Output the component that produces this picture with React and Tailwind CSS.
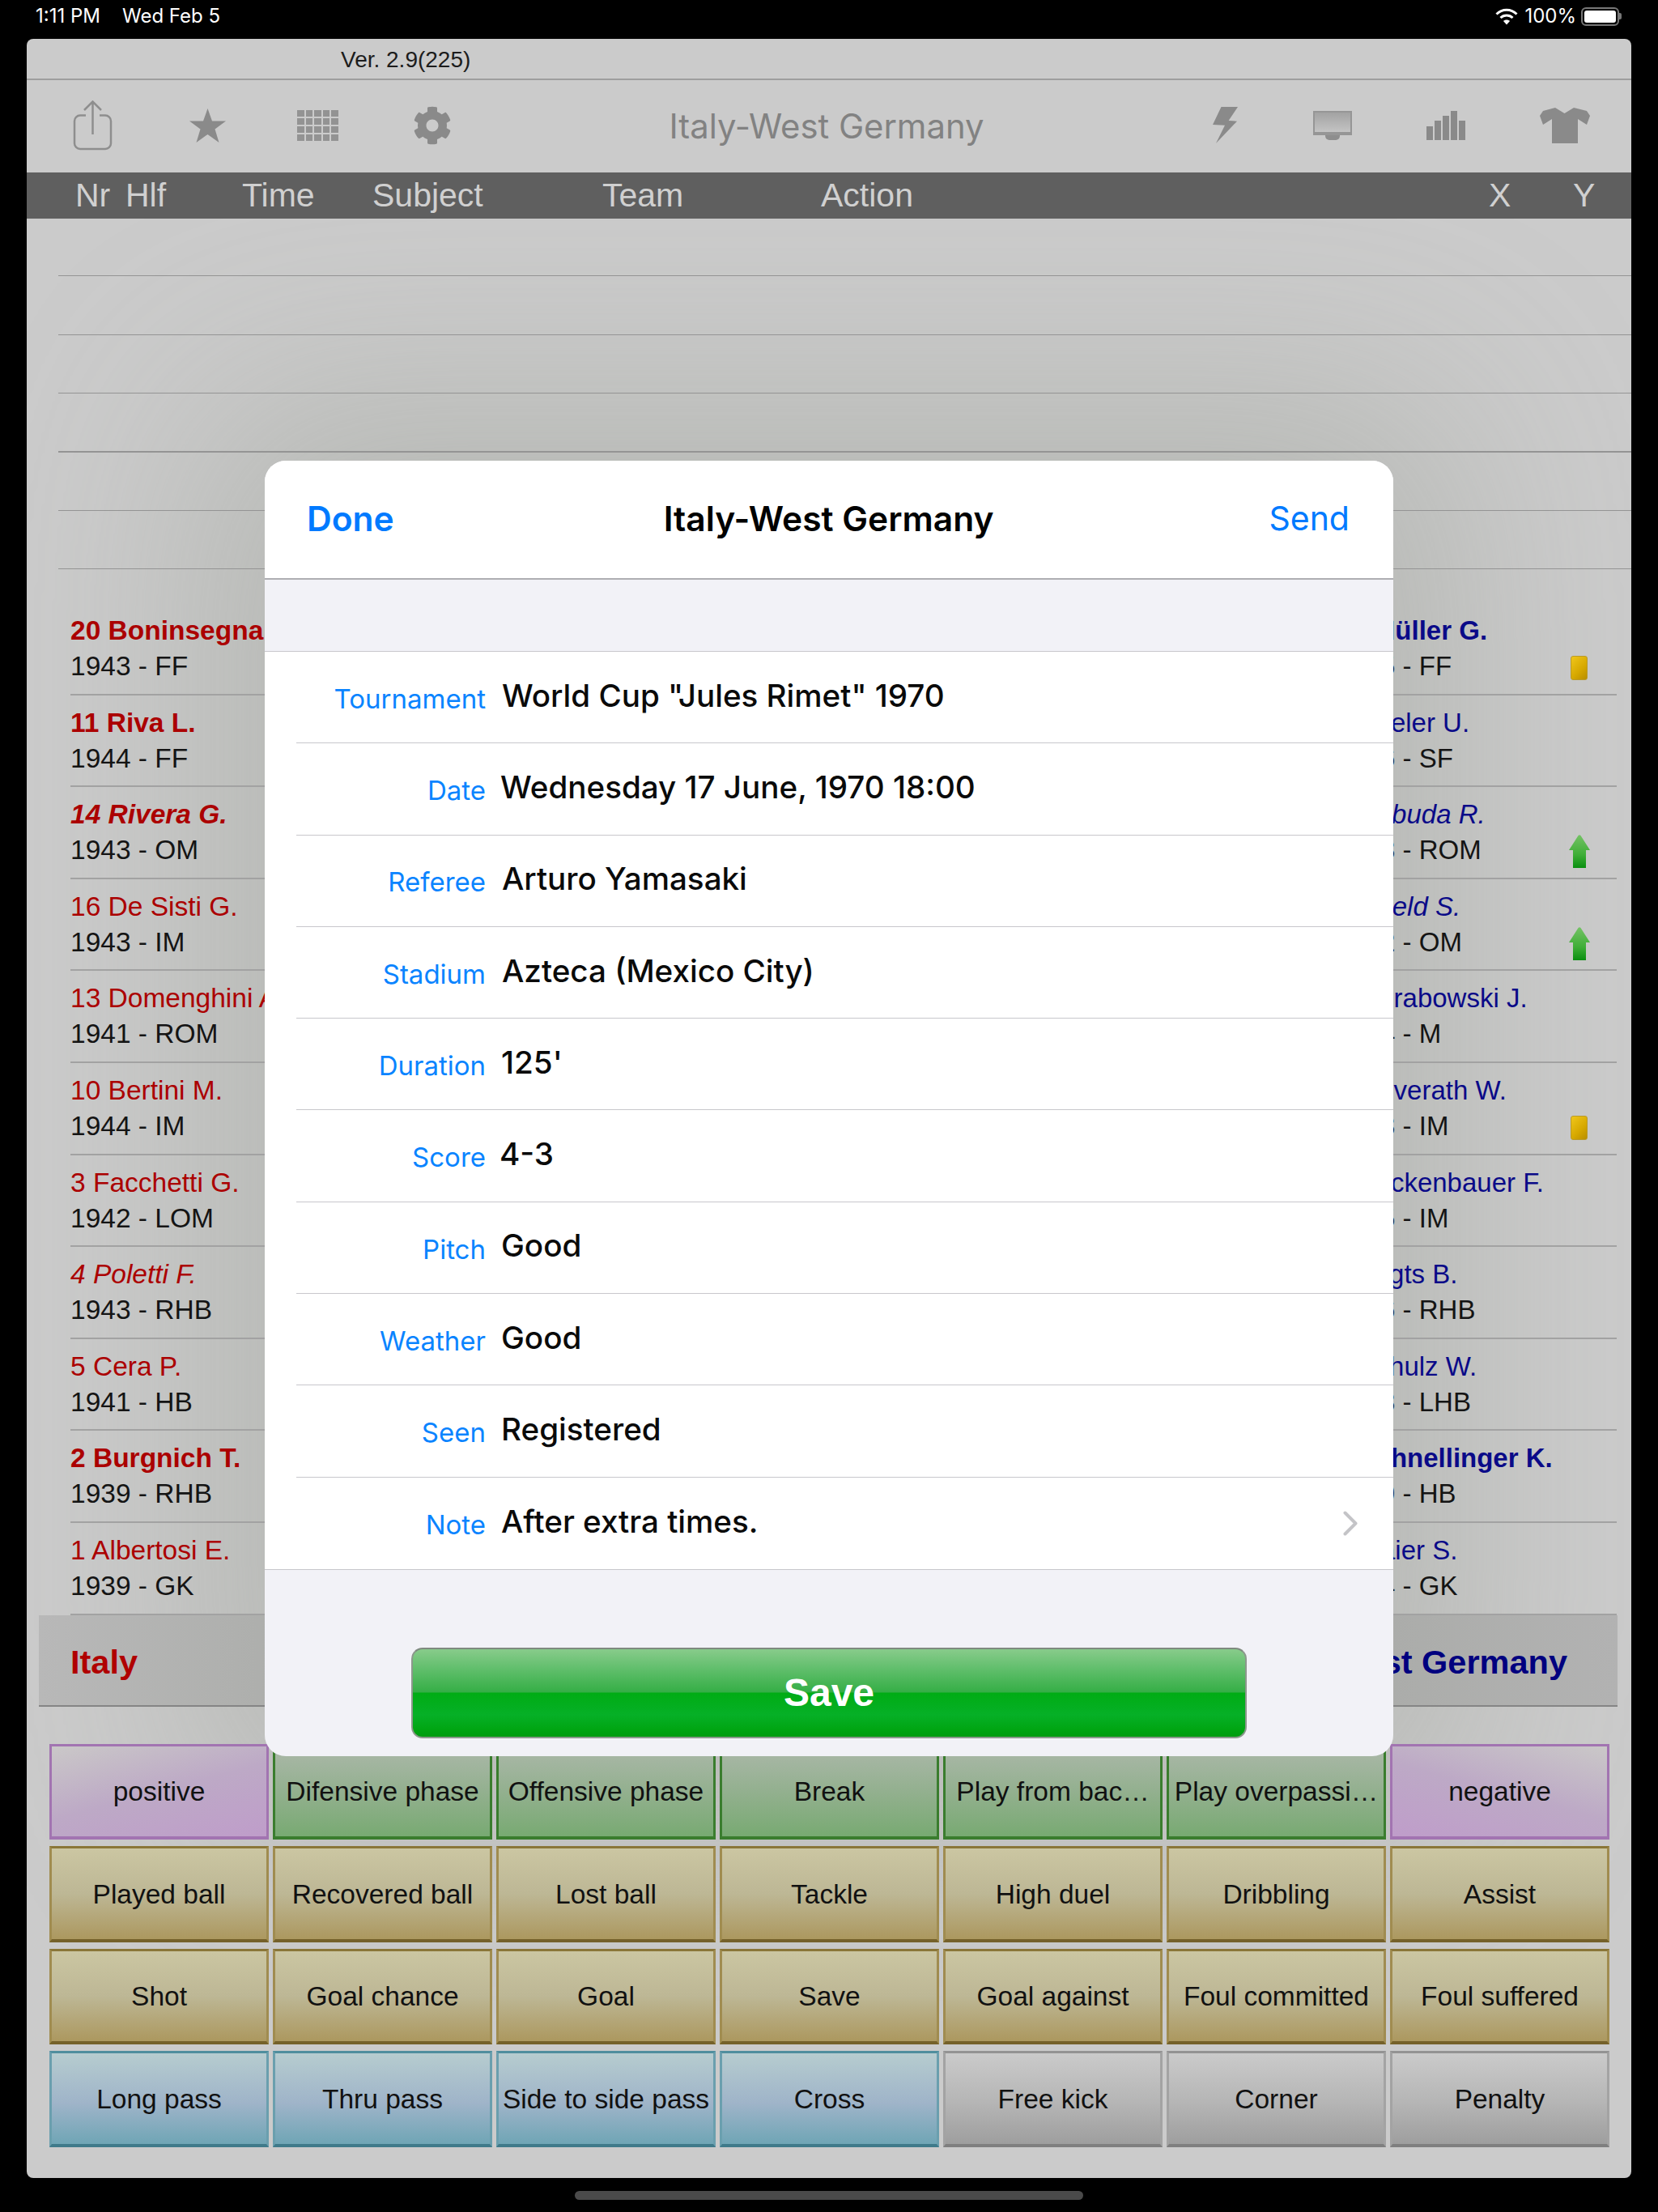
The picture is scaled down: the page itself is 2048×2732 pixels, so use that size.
import React from 'react'
import { FaCog } from 'react-icons/fa'

const leftPlayers = [
  { name: '20 Boninsegna R.', info: '1943 - FF', style: 'font-bold' },
  { name: '11 Riva L.', info: '1944 - FF', style: 'font-bold' },
  { name: '14 Rivera G.', info: '1943 - OM', style: 'font-bold italic' },
  { name: '16 De Sisti G.', info: '1943 - IM', style: '' },
  { name: '13 Domenghini A.', info: '1941 - ROM', style: '' },
  { name: '10 Bertini M.', info: '1944 - IM', style: '' },
  { name: '3 Facchetti G.', info: '1942 - LOM', style: '' },
  { name: '4 Poletti F.', info: '1943 - RHB', style: 'italic' },
  { name: '5 Cera P.', info: '1941 - HB', style: '' },
  { name: '2 Burgnich T.', info: '1939 - RHB', style: 'font-bold' },
  { name: '1 Albertosi E.', info: '1939 - GK', style: '' },
]

const rightPlayers = [
  { name: '13 Müller G.', info: '1945 - FF', style: 'font-bold', mark: 'card' },
  { name: '9 Seeler U.', info: '1936 - SF', style: '' },
  { name: '11 Libuda R.', info: '1943 - ROM', style: 'italic', mark: 'arrow' },
  { name: '21 Held S.', info: '1942 - OM', style: 'italic', mark: 'arrow' },
  { name: '20 Grabowski J.', info: '1944 - M', style: '' },
  { name: '12 Overath W.', info: '1943 - IM', style: '', mark: 'card' },
  { name: '5 Beckenbauer F.', info: '1945 - IM', style: '' },
  { name: '2 Vogts B.', info: '1946 - RHB', style: '' },
  { name: '4 Schulz W.', info: '1938 - LHB', style: '' },
  { name: '3 Schnellinger K.', info: '1939 - HB', style: 'font-bold' },
  { name: '1 Maier S.', info: '1944 - GK', style: '' },
]

const rows = [
  { label: 'Tournament', value: 'World Cup "Jules Rimet" 1970', gap: 'ml-[20px]' },
  { label: 'Date', value: 'Wednesday 17 June, 1970 18:00', gap: 'ml-[18px]' },
  { label: 'Referee', value: 'Arturo Yamasaki', gap: 'ml-[20px]' },
  { label: 'Stadium', value: 'Azteca (Mexico City)', gap: 'ml-[20px]' },
  { label: 'Duration', value: "125'", gap: 'ml-[19px]' },
  { label: 'Score', value: '4-3', gap: 'ml-[17px]' },
  { label: 'Pitch', value: 'Good', gap: 'ml-[19px]' },
  { label: 'Weather', value: 'Good', gap: 'ml-[19px]' },
  { label: 'Seen', value: 'Registered', gap: 'ml-[19px]' },
  { label: 'Note', value: 'After extra times.', gap: 'ml-[19px]', chevron: true },
]

const purple1 = 'border-[#a274b1] bg-[linear-gradient(165deg,#cac8c8_0%,#bda9c6_50%,#bf9dca_100%)]'
const purple2 = 'border-[#a274b1] bg-[linear-gradient(195deg,#cac8c8_0%,#bda9c6_50%,#bf9dca_100%)]'
const green = 'border-[#3a7d2e] bg-[linear-gradient(180deg,#abb8a9_0%,#93b08f_50%,#78aa72_100%)]'
const tan = 'border-[#a08c50] border-t-[#8a7638] border-b-[#75612a] bg-[linear-gradient(180deg,#cbc6a2_0%,#bdb795_50%,#ac985f_100%)]'
const blue = 'border-[#6a9fae] border-t-[#4f8e9e] border-b-[#3f7a8a] bg-[linear-gradient(180deg,#b6cccf_0%,#9fb4c9_55%,#6fa5b5_100%)]'
const gray = 'border-[#a3a3a3] border-t-[#939393] border-b-[#7f7f7f] bg-[linear-gradient(180deg,#cacaca_0%,#b5b5b5_55%,#9e9e9e_100%)]'

const buttons = [
  ['positive', purple1], ['Difensive phase', green], ['Offensive phase', green], ['Break', green], ['Play from bac…', green], ['Play overpassi…', green], ['negative', purple2],
  ['Played ball', tan], ['Recovered ball', tan], ['Lost ball', tan], ['Tackle', tan], ['High duel', tan], ['Dribbling', tan], ['Assist', tan],
  ['Shot', tan], ['Goal chance', tan], ['Goal', tan], ['Save', tan], ['Goal against', tan], ['Foul committed', tan], ['Foul suffered', tan],
  ['Long pass', blue], ['Thru pass', blue], ['Side to side pass', blue], ['Cross', blue], ['Free kick', gray], ['Corner', gray], ['Penalty', gray],
]

const ShareIcon = () => (
  <svg width="49" height="62" viewBox="0 0 49 62" fill="none" stroke="#8e8e8e" strokeWidth="2.5">
    <path d="M16 18.5H9a7 7 0 0 0-7 7V53a7 7 0 0 0 7 7h31a7 7 0 0 0 7-7V25.500a7 7 0 0 0-7-7h-7" />
    <path d="M24.500 2V42M14 12L24.500 1.500L35 12" />
  </svg>
)

const StarIcon = () => (
  <svg width="45" height="42" viewBox="0 0 45 42" fill="#8a8a8a">
    <path d="M22.500 0L28 15.500H45L31.500 25.500L36.500 42L22.500 32L8.500 42L13.500 25.500L0 15.500H17Z" />
  </svg>
)

const GridIcon = () => (
  <div className="grid grid-cols-5 gap-[2px] w-[51px]">
    {Array.from({ length: 20 }).map((_, i) => (
      <div key={i} className="h-[8px] bg-[#939393]" />
    ))}
  </div>
)

const BoltIcon = () => (
  <svg width="32" height="46" viewBox="0 0 32 46" fill="#8a8a8a">
    <path d="M31 0H10.500L0 22L15 22.700L4 45L30 17.700L19.600 17Z" />
  </svg>
)

const MonitorIcon = () => (
  <div className="flex flex-col items-center w-[48px]">
    <div className="w-[48px] h-[30px] border-[2px] border-b-[4px] border-[#969696] bg-[linear-gradient(180deg,#a2a2a2_0%,#c4c4c4_100%)]" />
    <div className="w-[18px] h-[6px] rounded-b-[5px] bg-[#8e8e8e]" />
  </div>
)

const BarsIcon = () => (
  <div className="flex items-end gap-[2px] h-[36px]">
    <div className="w-[8px] h-[17px] bg-[#8a8a8a]" />
    <div className="w-[8px] h-[24px] bg-[#8a8a8a]" />
    <div className="w-[8px] h-[30px] bg-[#8a8a8a]" />
    <div className="w-[8px] h-[36px] bg-[#8a8a8a]" />
    <div className="w-[8px] h-[24px] bg-[#8a8a8a]" />
  </div>
)

const ShirtIcon = () => (
  <svg width="64" height="44" viewBox="0 0 64 44" fill="#8a8a8a">
    <path d="M20 0L31.500 7L43 0L59 4L63 10L59 21L48 14V44H16V14L5 21L1 10L5 4Z" />
  </svg>
)

const UpArrow = () => (
  <svg width="26" height="41" viewBox="0 0 26 41">
    <defs>
      <linearGradient id="upArrow" x1="0" y1="0" x2="0" y2="1">
        <stop offset="0" stopColor="#74c265" />
        <stop offset="0.6" stopColor="#3fae37" />
        <stop offset="1" stopColor="#0a8f10" />
      </linearGradient>
    </defs>
    <path d="M11.500 1Q13 -0.500 14.500 1L26 19H21V41H5V19H0Z" fill="url(#upArrow)" />
  </svg>
)

const YellowCard = () => (
  <div className="w-[21px] h-[30px] rounded-[3px] border border-[#b99a2a] bg-[linear-gradient(135deg,#f0c61a_0%,#d6a800_60%,#b88e00_100%)]" />
)

const WifiIcon = () => (
  <svg width="28" height="21" viewBox="0 0 28 21" fill="none" stroke="#ffffff" strokeWidth="3">
    <path d="M1.500 7.500C8.500 0.500 19.500 0.500 26.500 7.500" />
    <path d="M6.500 12C10.500 8 17.500 8 21.500 12" />
    <path d="M14 20.500L10 16C12 14 16 14 18 16Z" fill="#ffffff" stroke="none" />
  </svg>
)

const PlayerRow = ({ player, tone, size, children }) => (
  <div className="h-[113.600px] border-b-2 border-[#a2a2a2] pt-[12px] flex justify-between">
    <div className={`whitespace-nowrap ${size}`}>
      <div className={`h-[44px] leading-[44px] ${tone} ${player.style}`}>{player.name}</div>
      <div className="h-[44px] leading-[44px] text-[#141414]">{player.info}</div>
    </div>
    {children}
  </div>
)

const DetailRow = ({ row, last }) => (
  <div className={last ? 'border-b border-[#c8c7cc] bg-white' : 'pl-[39px] bg-white'}>
    <div className={`h-[113.300px] flex items-center ${last ? 'pl-[39px]' : 'border-b border-[#c8c7cc]'}`}>
      <div className="w-[234px] text-right text-[33px] text-[#0a84ff] mt-[5px]">{row.label}</div>
      <div className={`${row.gap} flex-1 text-[38.600px] font-medium text-[#0a0a0a] -mt-[3px]`}>{row.value}</div>
      {row.chevron && (
        <svg className="mr-[44px]" width="18" height="31" viewBox="0 0 18 31" fill="none" stroke="#c4c4c7" strokeWidth="4" strokeLinecap="round" strokeLinejoin="round">
          <path d="M2.500 2.500L15.500 15.500L2.500 28.500" />
        </svg>
      )}
    </div>
  </div>
)

const App = () => {
  return (
    <div className="relative w-[2048px] h-[2732px] bg-black overflow-hidden font-['Liberation_Sans',sans-serif]">
      {/* status bar */}
      <div className="h-[48px] flex items-center justify-between pl-[44px] pr-[45px] pb-[8px] text-white text-[24px] font-['Inter',sans-serif]">
        <div className="flex">
          <span>1:11 PM</span>
          <span className="ml-[27px]">Wed Feb 5</span>
        </div>
        <div className="flex items-center">
          <WifiIcon />
          <span className="ml-[8px]">100%</span>
          <div className="ml-[6px] w-[47px] h-[23px] rounded-[6px] border-2 border-[#777777] p-[2px]">
            <div className="w-full h-full rounded-[3px] bg-white" />
          </div>
          <div className="w-[3px] h-[8px] rounded-r-[2px] bg-[#777777]" />
        </div>
      </div>

      {/* app window */}
      <div className="relative mx-[33px] h-[2642px] rounded-[8px] bg-[#cbcbcb] overflow-hidden">
        {/* soft shade the sheet throws on the page, under the text */}
        <div className="absolute left-[294px] top-[521px] w-[1394px] h-[1600px] rounded-[26px] shadow-[0_0_300px_70px_rgba(150,156,145,0.4)]" />

        <div className="relative">
          <div className="h-[51px] border-b-2 border-[#9e9e9e] pl-[388px] pt-[2px] flex items-center">
            <span className="text-[28px] text-[#1c1c1c]">Ver. 2.9(225)</span>
          </div>

          <div className="h-[114px] flex items-center pl-[57px] pr-[50px] pb-[2px]">
            <ShareIcon />
            <div className="ml-[95px]"><StarIcon /></div>
            <div className="ml-[88px]"><GridIcon /></div>
            <FaCog className="ml-[92px] text-[#8a8a8a]" size={48} />
            <div className="flex-1 pr-[14px] pt-[2px] text-center text-[41.800px] text-[#828282] font-['Inter',sans-serif]">Italy-West Germany</div>
            <BoltIcon />
            <div className="ml-[92px]"><MonitorIcon /></div>
            <div className="ml-[92px]"><BarsIcon /></div>
            <div className="ml-[91px]"><ShirtIcon /></div>
          </div>

          <div className="h-[57px] bg-[#5f5f5f] flex items-center pl-[60px] text-[41px] text-[#d0d0d0]">
            <div className="w-[62px]">Nr</div>
            <div className="w-[144px]">Hlf</div>
            <div className="w-[161px]">Time</div>
            <div className="w-[284px]">Subject</div>
            <div className="w-[270px]">Team</div>
            <div className="w-[825px]">Action</div>
            <div className="w-[104px]">X</div>
            <div>Y</div>
          </div>

          {/* empty event list */}
          <div className="pl-[39px]">
            <div className="h-[71px] border-b border-[#949494]" />
            <div className="h-[73px] border-b border-[#949494]" />
            <div className="h-[72px] border-b border-[#949494]" />
            <div className="h-[73px] border-b-2 border-[#949494]" />
            <div className="h-[72px] border-b border-[#949494]" />
            <div className="h-[72px] border-b border-[#949494]" />
          </div>

          {/* line-ups */}
          <div className="mt-[42px] pl-[54px] pr-[18px] flex justify-between">
            <div className="w-[640px]">
              {leftPlayers.map((p) => (
                <PlayerRow key={p.name} player={p} tone="text-[#ab0000]" size="text-[33.500px]" />
              ))}
            </div>
            <div className="w-[347px]">
              {rightPlayers.map((p) => (
                <PlayerRow key={p.name} player={p} tone="text-[#0a0a88]" size="text-[33px]">
                  {p.mark === 'card' && (
                    <div className="mr-[36px] mt-[53px]"><YellowCard /></div>
                  )}
                  {p.mark === 'arrow' && (
                    <div className="mr-[33px] mt-[47px]"><UpArrow /></div>
                  )}
                </PlayerRow>
              ))}
            </div>
          </div>

          <div className="ml-[15px] mr-[17px] h-[113px] flex items-center justify-between pl-[39px] pr-[62px] pt-[7px] border-b-2 border-[#858585] bg-[linear-gradient(90deg,#b8b8b8_0%,#a6a8a4_25%,#a6a8a4_75%,#b2b2b2_100%)] text-[41.500px] font-bold">
            <span className="text-[#b00000]">Italy</span>
            <span className="text-[#00007f]">West Germany</span>
          </div>

          {/* event buttons */}
          <div className="mt-[46px] ml-[28px] grid grid-cols-[repeat(7,271px)] gap-x-[5px] gap-y-[8px]">
            {buttons.map(([text, look], i) => (
              <div key={i} className={`h-[118.500px] border-[3px] border-b-4 pt-[2px] flex items-center justify-center text-[33.500px] text-[#111111] whitespace-nowrap ${look}`}>
                {text}
              </div>
            ))}
          </div>
        </div>
      </div>

      {/* home indicator */}
      <div className="mt-[16px] mx-auto w-[628px] h-[11px] rounded-full bg-[#4a4a4a]" />

      {/* match details sheet */}
      <div className="absolute left-[327px] top-[569px] w-[1394px] h-[1600px] rounded-[26px] bg-[#f2f2f7] overflow-hidden font-['Inter',sans-serif]">
        <div className="h-[147px] bg-white border-b-2 border-[#aeaeb2] flex items-center justify-between pl-[52px] pr-[54px] pb-[2px]">
          <span className="text-[42.500px] font-semibold text-[#007aff]">Done</span>
          <span className="mr-[7px] text-[42.500px] font-semibold text-black">Italy-West Germany</span>
          <span className="text-[41px] text-[#007aff]">Send</span>
        </div>
        <div className="h-[89px] border-b border-[#c8c7cc]" />
        {rows.map((r, i) => (
          <DetailRow key={r.label} row={r} last={i === rows.length - 1} />
        ))}
        <div className="mt-[96px] mx-auto w-[1032px] h-[112px] rounded-[14px] border-2 border-[#8c988c] border-t-[#7f8a7f] flex items-center justify-center bg-[linear-gradient(180deg,#88cb8b_0%,#5cbd68_25%,#35ae46_49%,#00ac14_50%,#06b027_75%,#00a512_92%,#009c10_100%)] text-white text-[48px] font-bold font-['Liberation_Sans',sans-serif]">
          Save
        </div>
      </div>
    </div>
  )
}

export default App
